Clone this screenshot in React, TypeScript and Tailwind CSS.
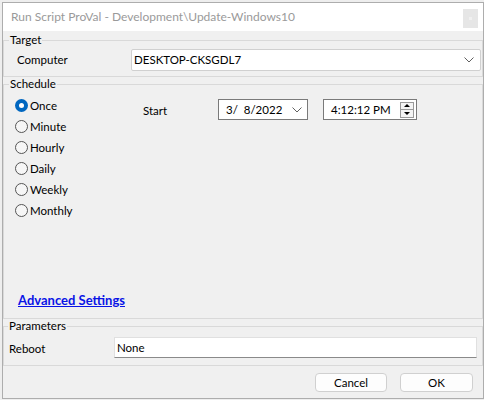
import React from "react";

function Radio({ label, checked }: { label: string; checked?: boolean }) {
  return (
    <div className="h-[21px] flex items-center gap-[2px]">
      {checked ? (
        <span className="w-[13px] h-[13px] rounded-full bg-[#0067c0] flex items-center justify-center shrink-0">
          <span className="w-[5px] h-[5px] rounded-full bg-white" />
        </span>
      ) : (
        <span className="w-[13px] h-[13px] rounded-full border border-[#555555] bg-[#f6f6f6] shrink-0" />
      )}
      <span className="leading-[14px]">{label}</span>
    </div>
  );
}

function Chevron({ className }: { className?: string }) {
  return (
    <svg width="10" height="6" viewBox="0 0 10 6" className={className}>
      <polyline points="0.5,0.5 5,5 9.5,0.5" fill="none" stroke="#606060" strokeWidth="1" />
    </svg>
  );
}

export default function App() {
  return (
    <div className="w-[484px] h-[400px] bg-[#eeeeee] pt-[2px] pl-[2px] font-['Lato',sans-serif] text-[11.5px] text-black">
      <div className="w-[482px] h-[397px] border border-[#adadad] bg-[#f0f0f0] flex flex-col">
        <div className="h-[28px] bg-white flex items-center pl-[8px] pr-[5px] shrink-0">
          <span className="text-[12px] text-[#9a9a9a] flex-1 leading-[16px]">
            Run Script ProVal - Development\Update-Windows10
          </span>
          <span className="w-[15px] h-[19px] bg-[#e6e6e6] mt-[2px] flex items-center justify-center">
            <span className="w-[3px] h-[3px] bg-[#f0f0f0]" />
          </span>
        </div>

        <fieldset className="mt-[2px] border border-[#d9d9d9]">
          <legend className="ml-[5px] px-[1px] leading-[14px]">Target</legend>
          <div className="flex items-center pl-[13px] pr-[1px] pt-[2px] pb-[5px]">
            <span className="w-[114px] leading-[14px]">Computer</span>
            <div className="flex-1 h-[22px] bg-white border border-[#d0d0d0] rounded-[2px] flex items-center pl-[2px] pr-[6px]">
              <span className="flex-1 leading-[14px]">DESKTOP-CKSGDL7</span>
              <Chevron />
            </div>
          </div>
        </fieldset>

        <fieldset className="border border-[#d9d9d9]">
          <legend className="ml-[5px] px-[1px] leading-[14px]">Schedule</legend>
          <div className="h-[227px] flex flex-col">
            <div className="flex">
              <div className="w-[139px] pl-[11px] pt-[4px] flex flex-col">
                <Radio label="Once" checked />
                <Radio label="Minute" />
                <Radio label="Hourly" />
                <Radio label="Daily" />
                <Radio label="Weekly" />
                <Radio label="Monthly" />
              </div>
              <div className="flex items-start pt-[8px]">
                <span className="w-[75px] pt-[5px] leading-[14px]">Start</span>
                <div className="w-[90px] h-[21px] bg-white border border-[#7a7a7a] flex items-center pl-[7px] pr-[5px]">
                  <span className="flex-1 whitespace-pre leading-[14px]">3/  8/2022</span>
                  <Chevron />
                </div>
                <div className="ml-[15px] w-[94px] h-[21px] bg-white border border-[#7a7a7a] flex items-center pl-[7px] pr-[2px]">
                  <span className="flex-1 leading-[14px]">4:12:12 PM</span>
                  <div className="flex flex-col w-[14px]">
                    <span className="h-[8px] border border-[#9a9a9a] bg-[#f4f4f4] flex items-center justify-center">
                      <svg width="6" height="3" viewBox="0 0 6 3">
                        <polygon points="0,3 3,0 6,3" fill="#000" />
                      </svg>
                    </span>
                    <span className="h-[8px] border border-t-0 border-[#9a9a9a] bg-[#f4f4f4] flex items-center justify-center">
                      <svg width="6" height="3" viewBox="0 0 6 3">
                        <polygon points="0,0 6,0 3,3" fill="#000" />
                      </svg>
                    </span>
                  </div>
                </div>
              </div>
            </div>
            <div className="mt-auto pb-[9px] pl-[14px]">
              <span className="font-bold text-[13px] text-[#0a14e6] underline leading-[14px]">Advanced Settings</span>
            </div>
          </div>
        </fieldset>

        <fieldset className="border border-[#d9d9d9]">
          <legend className="ml-[4px] px-[1px] leading-[14px]">Parameters</legend>
          <div className="flex items-center pl-[5px] pr-[5px] pt-[4px] pb-[7px]">
            <span className="w-[105px] leading-[14px] pt-[2px]">Reboot</span>
            <div className="flex-1 h-[21px] bg-white border border-[#e0e0e0] border-b-[#8a8a8a] flex items-center pl-[2px]">
              <span className="leading-[14px]">None</span>
            </div>
          </div>
        </fieldset>

        <div className="flex justify-end gap-[13px] pt-[7px] pr-[10px]">
          <button className="w-[72px] h-[19px] bg-[#fdfdfd] border border-[#d0d0d0] rounded-[4px] flex items-center justify-center leading-[14px]">
            Cancel
          </button>
          <button className="w-[73px] h-[19px] bg-[#fdfdfd] border border-[#d0d0d0] rounded-[4px] flex items-center justify-center leading-[14px]">
            OK
          </button>
        </div>
      </div>
    </div>
  );
}
